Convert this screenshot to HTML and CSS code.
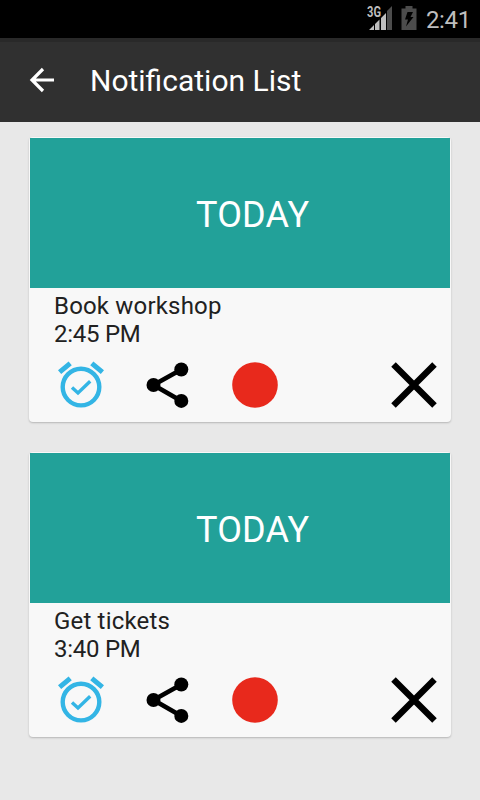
FILE: index.html
```html
<!DOCTYPE html>
<html lang="en">
<head>
<meta charset="utf-8">
<title>Notification List</title>
<link rel="stylesheet" href="styles.css">
</head>
<body>
<svg width="0" height="0" class="defs">
  <symbol id="alarm" viewBox="0 0 48 48">
    <g fill="none" stroke="#33b5e5">
      <circle cx="24" cy="26.1" r="18.3" stroke-width="4.400"/>
      <path d="M2.600 11.100 13.200 2.300M45.400 11.100 34.800 2.300" stroke-width="5"/>
      <path d="M15 26.400 21 32 33.200 20.300" stroke-width="3.400"/>
    </g>
  </symbol>
  <symbol id="share" viewBox="0 0 48 48">
    <path d="M37.3 8.5 9.5 24 37.3 40" fill="none" stroke="#000" stroke-width="4.600"/>
    <circle cx="9.5" cy="24" r="7"/><circle cx="37.3" cy="8.5" r="7"/><circle cx="37.3" cy="39.9" r="7"/>
  </symbol>
  <symbol id="record" viewBox="0 0 48 48"><circle cx="24" cy="24" r="22.8" fill="#e8291c"/></symbol>
  <symbol id="close" viewBox="0 0 48 48"><path d="M3.5 3.5 44.5 44.5M44.5 3.5 3.5 44.5" stroke="#000" stroke-width="6.400"/></symbol>
</svg>
<div class="status">
  <svg class="signal" width="26" height="26" viewBox="0 0 26 26">
    <path d="M25 2V26H20V7Z" fill="#4c4c4c"/>
    <path d="M2 26 7 21V26ZM8 26V20L12.500 15.500V26ZM14 26V14L19 9V26Z" fill="#bebebe"/>
    <text x="0" y="13" class="net" textLength="14" lengthAdjust="spacingAndGlyphs">3G</text>
  </svg>
  <svg class="battery" width="16" height="24" viewBox="0 0 16 24">
    <path d="M4.500 0H11.500V2.500H15.500V24H.5V2.500H4.500Z" fill="#4c4c4c"/>
    <path d="M6.500 6H12L9.500 11H12.500L5 20.500 7 13.500H4Z" fill="#000"/>
  </svg>
  <span class="clock">2:41</span>
</div>
<header class="bar">
  <svg width="26" height="26" viewBox="0 0 26 26"><path d="M25 13H3M14 2 3 13 14 24" fill="none" stroke="#fff" stroke-width="3.200"/></svg>
  <h1>Notification List</h1>
</header>
<main class="list">
  <article class="card">
    <div class="banner"><span>TODAY</span></div>
    <div class="info"><div class="name">Book workshop</div><div class="time">2:45 PM</div></div>
    <div class="actions"><svg><use href="#alarm"/></svg><svg><use href="#share"/></svg><svg><use href="#record"/></svg><svg class="dismiss"><use href="#close"/></svg></div>
  </article>
  <article class="card">
    <div class="banner"><span>TODAY</span></div>
    <div class="info"><div class="name">Get tickets</div><div class="time">3:40 PM</div></div>
    <div class="actions"><svg><use href="#alarm"/></svg><svg><use href="#share"/></svg><svg><use href="#record"/></svg><svg class="dismiss"><use href="#close"/></svg></div>
  </article>
</main>
</body>
</html>
```
FILE: styles.css
```css
* { box-sizing: border-box; }
body { margin: 0; height: 800px; overflow: hidden; background: #e8e8e8; font-family: Roboto, sans-serif; color: #212121; }
.defs { position: absolute; }
.status { height: 38px; background: #000; display: flex; align-items: flex-start; justify-content: flex-end; padding-right: 9px; }
.signal { margin-top: 4px; margin-right: 8px; }
.battery { margin-top: 6px; margin-right: 9px; }
.net { font: 700 14px Roboto, sans-serif; fill: #bebebe; stroke: #000; stroke-width: 2px; paint-order: stroke; }
.clock { font-size: 24px; line-height: 28px; margin-top: 6px; color: #bebebe; letter-spacing: -.3px; }
.bar { height: 84px; background: #303030; border-top: 4px solid #292929; display: flex; align-items: center; padding: 0 0 4px 29px; }
.bar h1 { margin: 2px 0 0 35px; font-size: 30px; font-weight: 400; line-height: 36px; color: #fff; }
.list { padding: 15px 29px 0; display: flex; flex-direction: column; gap: 30px; }
.card { height: 285px; background: #f8f8f8; border-radius: 4px; padding: 1px; box-shadow: 0 1px 2px rgba(0,0,0,.22); }
.banner { height: 150px; background: #22a199; color: #fff; display: flex; align-items: center; padding: 4px 0 0 166px; font-size: 36px; letter-spacing: .15px; }
.info { padding: 4px 24px 0; font-size: 24px; line-height: 28px; height: 73px; }
.name { letter-spacing: .18px; }
.time { letter-spacing: -.25px; }
.actions { display: flex; gap: 39px; padding: 0 12px 0 27px; }
.actions svg { width: 48px; height: 48px; flex: none; }
.actions .dismiss { margin-left: auto; }
```
